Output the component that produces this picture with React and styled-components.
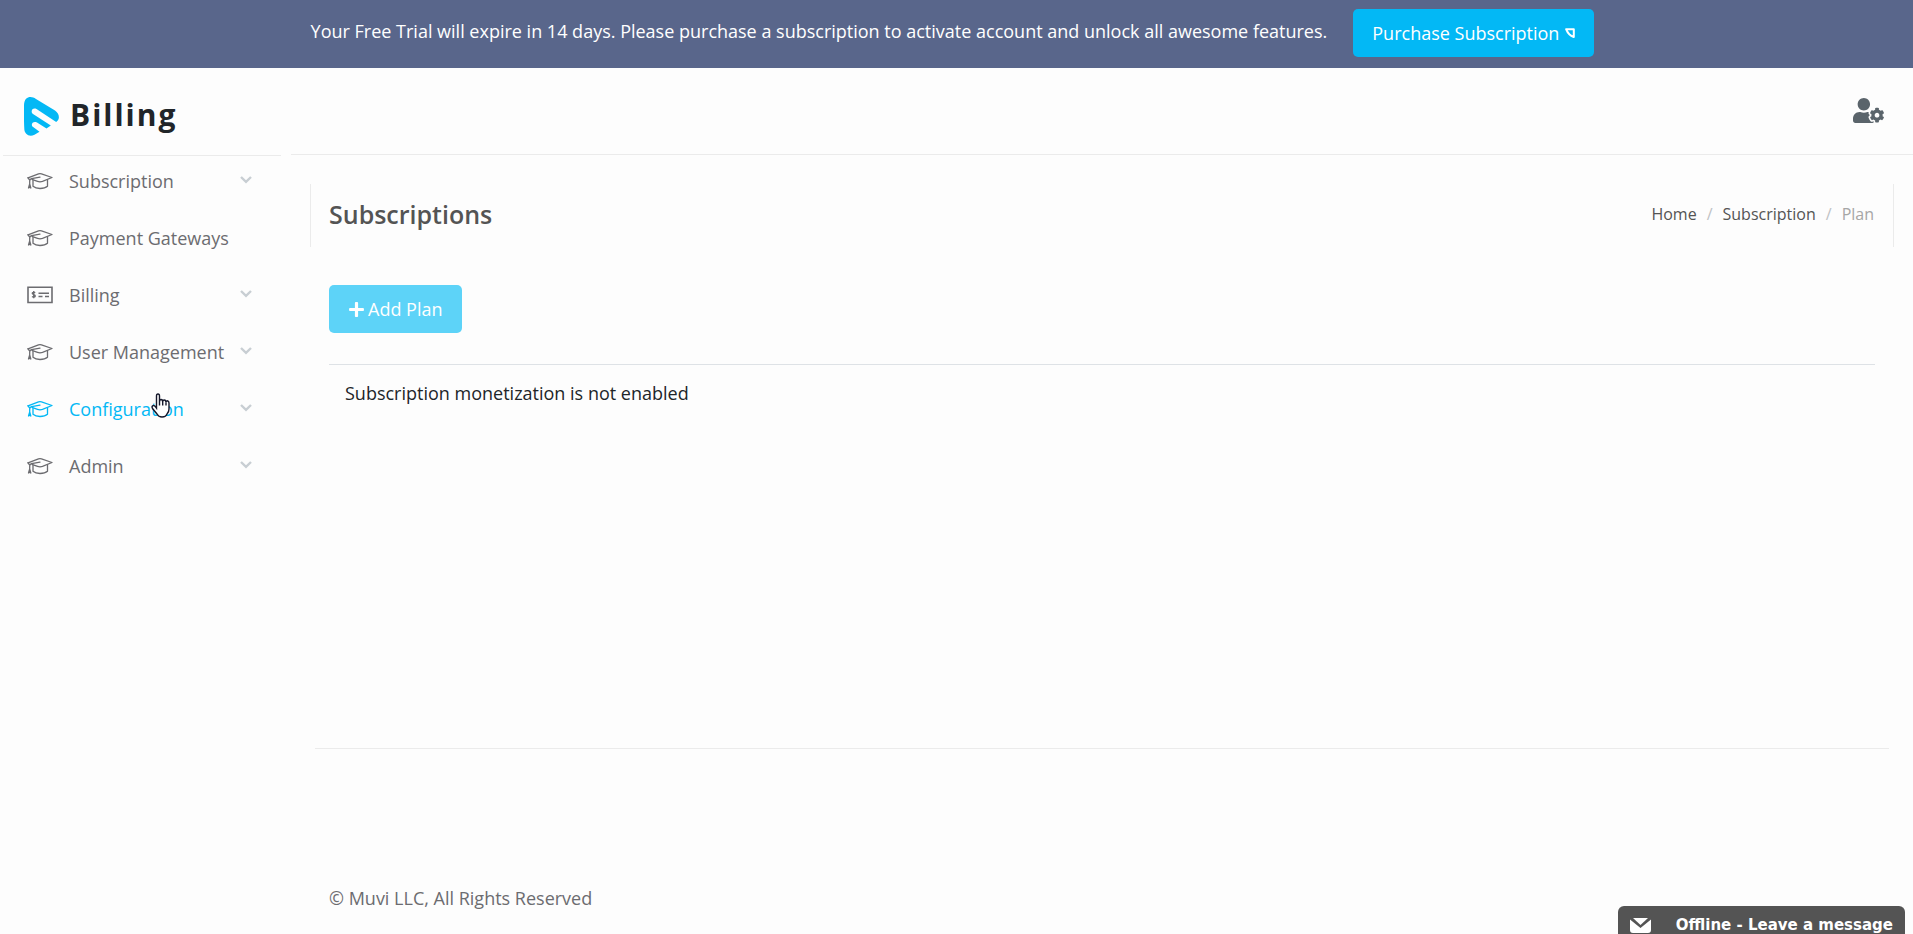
import React from 'react';
import styled, { createGlobalStyle } from 'styled-components';
import { FaPlus, FaUserCog } from 'react-icons/fa';

const GlobalStyle = createGlobalStyle`
	:root {
		--white: #fff;
		--page: #fdfdfd;
		--blue: #03b8f5;
		--blueLight: #5dd3f8;
		--slate: #59668b;
		--dark: #212529;
		--line: #ebebeb;
		--muted: #6c6c70;
	}

	* {
		box-sizing: border-box;
	}

	body {
		margin: 0;
		background: var(--page);
		color: var(--dark);
		font-family: 'Open Sans', 'Noto Sans', sans-serif;
		font-size: 18px;
		line-height: 24px;
	}

	a {
		color: inherit;
		text-decoration: none;
	}
`;

const Page = styled.div`
	min-height: 100vh;
	display: flex;
	flex-direction: column;
`;

const TrialBar = styled.div`
	display: flex;
	justify-content: center;
	align-items: flex-start;
	gap: 26px;
	height: 68px;
	padding: 9px 8px 0 0;
	background: var(--slate);
	color: var(--white);

	p {
		margin: 10px 0 0;
	}
`;

const Button = styled.button`
	display: inline-flex;
	align-items: center;
	gap: ${(props) => props.$gap};
	height: 48px;
	padding: 0 19px;
	border: 0;
	border-radius: 5px;
	background: ${(props) => (props.$soft ? 'var(--blueLight)' : 'var(--blue)')};
	color: var(--white);
	font: inherit;
	cursor: pointer;
`;

const Body = styled.div`
	flex: 1;
	display: flex;
`;

const Sidebar = styled.aside`
	width: 291px;
	flex-shrink: 0;
	padding: 0 10px 0 3px;
`;

const Brand = styled.a`
	display: flex;
	align-items: center;
	gap: 11px;
	height: 88px;
	padding: 9px 0 0 21px;
	border-bottom: 1px solid var(--line);

	span {
		padding-bottom: 3px;
		font-size: 30px;
		font-weight: 700;
		line-height: 40px;
		letter-spacing: 2px;
	}
`;

const Menu = styled.ul`
	list-style: none;
	margin: 0;
	padding: 0;
`;

const MenuLink = styled.a`
	display: flex;
	align-items: center;
	height: 57px;
	padding: 0 29px 8px 24px;
	color: ${(props) => (props.$active ? 'var(--blue)' : 'var(--muted)')};

	span {
		flex: 1;
		margin-left: 16px;
	}
`;

const Main = styled.div`
	flex: 1;
	min-width: 0;
	display: flex;
	flex-direction: column;
`;

const TopBar = styled.header`
	display: flex;
	justify-content: flex-end;
	align-items: center;
	height: 87px;
	padding: 0 29px 2px 0;
	border-bottom: 1px solid var(--line);
`;

const IconButton = styled.button`
	display: flex;
	padding: 0;
	border: 0;
	background: none;
	color: #5a646b;
	cursor: pointer;
`;

const Heading = styled.div`
	display: flex;
	justify-content: space-between;
	align-items: center;
	height: 63px;
	margin: 29px 19px 0;
	padding: 0 19px 4px 18px;
	border: solid var(--line);
	border-width: 0 1px;

	h1 {
		margin: 0;
		color: #545454;
		font-size: 25px;
		font-weight: 600;
		line-height: 32px;
	}
`;

const Crumbs = styled.ol`
	display: flex;
	gap: 10px;
	list-style: none;
	margin: 0;
	padding: 0;
	color: #545454;
	font-size: 16px;

	li + li::before {
		content: '/';
		margin-right: 10px;
		color: #bfc2c5;
	}

	li:last-child {
		color: #a6a6a6;
	}
`;

const Content = styled.main`
	margin: 0 24px;
	padding: 38px 14px 0;
	min-height: 502px;
	border-bottom: 1px solid var(--line);
`;

const Notice = styled.p`
	margin: 31px 0 0;
	padding: 16px;
	border-top: 1px solid #dee2e6;
`;

const Footer = styled.footer`
	margin: auto 38px 24px;
	color: var(--muted);
`;

const Chat = styled.button`
	position: fixed;
	right: 8px;
	bottom: 0;
	display: flex;
	align-items: center;
	gap: 25px;
	height: 28px;
	padding: 10px 12px 0;
	border: 0;
	border-radius: 6px 6px 0 0;
	background: #545454;
	color: var(--white);
	font: 700 15px/18px 'DejaVu Sans', sans-serif;
	cursor: pointer;
`;

const Pointer = styled.svg`
	position: absolute;
	left: 151px;
	top: 393px;
	pointer-events: none;
`;

const Logo = () => (
	<svg width="35" height="39" viewBox="0 0 35 39" aria-hidden="true">
		<path
			fill="#03b8f5"
			d="M0 8C.3 2 3.200 0 6.500 0C8.500 0 10 .7 12 1.900L31 13.500C34.500 16 36 20 34 23.300L32.200 25L12.500 12C8.500 10 6 14.500 9 17L26.800 28.500L22.500 31.500L13 25.500C8.500 23.500 6 28 9.500 30.300L15.500 34.800L10.500 37.800C5 40.500.6 37 .3 32Q-.3 20 0 8Z"
		/>
	</svg>
);

const CapIcon = () => (
	<svg
		width="26"
		height="18"
		viewBox="0 0 26 18"
		fill="none"
		stroke="currentColor"
		strokeWidth="1.300"
		strokeLinejoin="round"
		strokeLinecap="round"
		aria-hidden="true"
	>
		<path d="M1 5.800L11.500 1.800Q13 1.300 14.500 1.800L25 5.500L15.500 9.400Q13 10.300 10.500 9.400L5 7.400" />
		<path d="M6 8.300V14.200Q8.500 16.500 13 16.500Q18 16.500 20.500 14.200V7.700" />
		<path d="M13 5.200L4.500 6.700Q2.700 7.300 2.700 9V15.500M1 5.800L2.700 8M1.500 16L2.700 12L3.800 16" />
	</svg>
);

const CheckIcon = () => (
	<svg width="26" height="18" viewBox="0 0 26 18" fill="none" stroke="currentColor" aria-hidden="true">
		<path strokeWidth="1.600" d="M1 1.200H25V16.500H1Z" />
		<path
			strokeWidth="1.300"
			d="M8.200 6.700C7.300 6 5.200 6.100 5.200 7.300C5.200 8.800 8.300 8.300 8.300 9.900C8.300 11.300 6 11.300 5 10.500M6.700 5V12.300"
		/>
		<path strokeWidth="1.600" d="M11.500 7.300H22M11.500 10.500H15.500M18 10.500H22" />
	</svg>
);

const Chevron = () => (
	<svg width="12" height="10" viewBox="0 0 12 10" fill="none" stroke="#c8ced3" strokeWidth="2.400" aria-hidden="true">
		<path d="M1 1L6 5.800L11 1" />
	</svg>
);

const CornerIcon = () => (
	<svg width="10" height="10" viewBox="0 0 10 10" fill="none" stroke="currentColor" strokeWidth="2" aria-hidden="true">
		<path d="M1.200 1.300H8.800V9Q3.500 7 1.200 1.300Z" strokeLinejoin="round" />
	</svg>
);

const MailIcon = () => (
	<svg width="21" height="15" viewBox="0 0 21 15" aria-hidden="true">
		<path fill="currentColor" d="M3 0H18L10.500 7Z" />
		<path fill="currentColor" d="M0 1.500L10.500 10L21 1.500V12Q21 15 18 15H3Q0 15 0 12Z" />
	</svg>
);

const menu = [
	{ label: 'Subscription', children: true },
	{ label: 'Payment Gateways' },
	{ label: 'Billing', children: true, icon: CheckIcon },
	{ label: 'User Management', children: true },
	{ label: 'Configuration', children: true, active: true },
	{ label: 'Admin', children: true },
];

const App = () => {
	return (
		<Page>
			<GlobalStyle />
			<TrialBar>
				<p>
					Your Free Trial will expire in 14 days. Please purchase a subscription to activate account and unlock all
					awesome features.
				</p>
				<Button $gap="6px">
					Purchase Subscription <CornerIcon />
				</Button>
			</TrialBar>

			<Body>
				<Sidebar>
					<Brand href="#home">
						<Logo />
						<span>Billing</span>
					</Brand>
					<Menu>
						{menu.map(({ label, children, active, icon: Icon = CapIcon }) => (
							<li key={label}>
								<MenuLink href="#menu" $active={active}>
									<Icon />
									<span>{label}</span>
									{children && <Chevron />}
								</MenuLink>
							</li>
						))}
					</Menu>
				</Sidebar>

				<Main>
					<TopBar>
						<IconButton aria-label="Account settings">
							<FaUserCog size={31} />
						</IconButton>
					</TopBar>
					<Heading>
						<h1>Subscriptions</h1>
						<Crumbs>
							<li>
								<a href="#home">Home</a>
							</li>
							<li>
								<a href="#subscription">Subscription</a>
							</li>
							<li>Plan</li>
						</Crumbs>
					</Heading>
					<Content>
						<Button $soft $gap="3px">
							<FaPlus size={17} /> Add Plan
						</Button>
						<Notice>Subscription monetization is not enabled</Notice>
					</Content>
					<Footer>© Muvi LLC, All Rights Reserved</Footer>
				</Main>
			</Body>

			<Chat>
				<MailIcon />
				Offline - Leave a message
			</Chat>
			<Pointer width="19" height="25" viewBox="0 0 19 25" fill="#fff" stroke="#15182b" strokeWidth="1.400">
				<path d="M5.500 14V3Q5.500 1 7 1Q8.500 1 8.500 3V9Q8.500 6.500 10 6.500Q11.700 6.500 11.700 9Q11.700 7 13.200 7Q15 7 15 9.500Q15 7.700 16.300 7.700Q18 8 18 10V16Q18 19 16 21Q15 24 11 24Q7.500 24 6 21L1.500 15.500Q.5 13.500 2 12.700Q3.500 12 5.500 15Z" />
				<path d="M8.500 9V12.500M11.700 9V12.500M15 9.500V12.500" />
			</Pointer>
		</Page>
	);
};

export default App;
